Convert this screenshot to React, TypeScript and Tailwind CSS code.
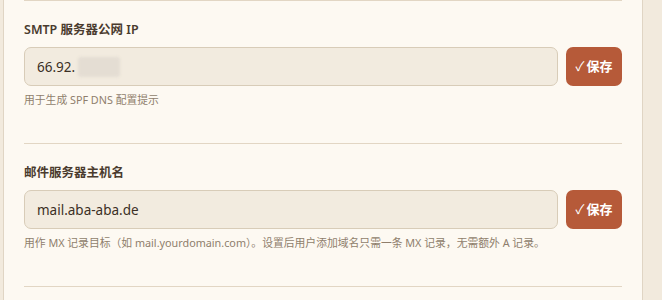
import React, { useState } from 'react';

interface FieldProps {
  label: string;
  value: string;
  hint: string;
  redacted?: boolean;
}

const SettingField: React.FC<FieldProps> = ({ label, value, hint, redacted }) => {
  const [text, setText] = useState(value);

  return (
    <div className="border-b border-[#e2d6c4] pt-[20px] pb-[36px]">
      <label className="block text-[12.5px] leading-[18px] font-semibold text-[#4a3b2e] mb-[8px]">{label}</label>
      <div className="flex items-center gap-2">
        <div className="relative flex-1">
          <input
            value={text}
            onChange={(e) => setText(e.target.value)}
            className="w-full h-[39px] rounded-[7px] border border-[#d8ccb8] bg-[#f2ebdf] px-3 text-[13.5px] text-[#3b2f25] outline-none"
          />
          {/* redacted part of the address */}
          {redacted && (
            <div className="absolute left-[54px] top-[10px] h-[20px] w-[42px] rounded-[3px] bg-[#e4ddd3] blur-[1.5px]" />
          )}
        </div>
        <button className="h-[39px] w-[56px] rounded-[7px] bg-[#b65a39] text-[13px] font-bold text-white flex items-center justify-center gap-[2px]">
          <span className="font-normal">✓</span>保存
        </button>
      </div>
      <p className="mt-[7px] text-[10.8px] leading-[14px] text-[#8f7e6c]">{hint}</p>
    </div>
  );
};

export default function App() {
  return (
    <div
      className="h-[300px] w-[662px] overflow-hidden bg-[#f2eadd] pl-[3px] pr-[19px]"
      style={{ fontFamily: '"Noto Sans", "Noto Sans CJK SC", sans-serif' }}
    >
      <div className="h-full border-x border-[#e0d5c4] bg-[#fdf9f2] px-[20px]">
        <div className="border-b border-[#e2d6c4]" />
        <SettingField label="SMTP 服务器公网 IP" value="66.92." hint="用于生成 SPF DNS 配置提示" redacted />
        <SettingField
          label="邮件服务器主机名"
          value="mail.aba-aba.de"
          hint="用作 MX 记录目标（如 mail.yourdomain.com）。设置后用户添加域名只需一条 MX 记录，无需额外 A 记录。"
        />
      </div>
    </div>
  );
}
